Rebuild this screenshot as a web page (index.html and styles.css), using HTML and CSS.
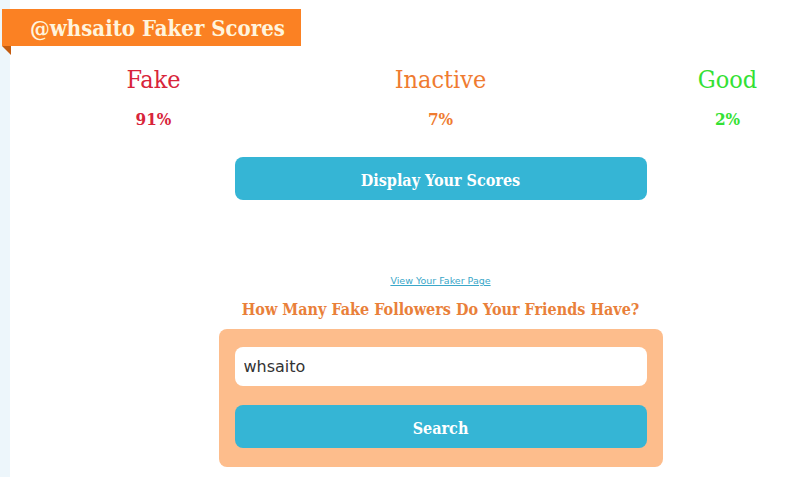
FILE: index.html
```html
<!DOCTYPE html>
<html>
<head>
<meta charset="utf-8">
<link rel="stylesheet" href="styles.css">
</head>
<body>
<div class="page">
  <aside class="strip"></aside>
  <main class="main">
    <div class="banner">@whsaito Faker Scores<span class="fold"></span></div>
    <div class="scores">
      <div class="score fake"><div class="label">Fake</div><div class="pct">91%</div></div>
      <div class="score inactive"><div class="label">Inactive</div><div class="pct">7%</div></div>
      <div class="score good"><div class="label">Good</div><div class="pct">2%</div></div>
    </div>
    <div class="center">
      <button class="btn display">Display Your Scores</button>
      <a class="link" href="#">View Your Faker Page</a>
      <h2 class="question">How Many Fake Followers Do Your Friends Have?</h2>
      <div class="searchbox">
        <input class="input" type="text" value="whsaito">
        <button class="btn search">Search</button>
      </div>
    </div>
  </main>
</div>
</body>
</html>
```

FILE: styles.css
```css
html, body {
  margin: 0;
  padding: 0;
  background: #ffffff;
  overflow: hidden;
}
.page {
  display: flex;
  width: 789px;
  height: 477px;
  overflow: hidden;
}
.strip {
  width: 10px;
  flex: none;
  background: #edf6fb;
}
.main {
  width: 861px;
  flex: none;
  position: relative;
  font-family: "DejaVu Serif Condensed", "DejaVu Serif", serif;
}
.banner {
  position: absolute;
  left: -8px;
  top: 9px;
  width: 299px;
  height: 37px;
  box-sizing: border-box;
  padding-left: 28px;
  padding-top: 1px;
  background: #fb8123;
  color: #fff4dd;
  font-size: 22px;
  font-weight: bold;
  line-height: 36px;
  white-space: nowrap;
}
.fold {
  position: absolute;
  left: 0;
  top: 37px;
  width: 0;
  height: 0;
  border-top: 9px solid #c45c10;
  border-left: 9px solid transparent;
}
.scores {
  display: grid;
  grid-template-columns: repeat(3, 287px);
  padding-top: 64px;
}
.score {
  text-align: center;
}
.label {
  font-size: 25px;
  line-height: 32px;
}
.pct {
  font-size: 17px;
  font-weight: bold;
  line-height: 22px;
  margin-top: 12px;
}
.fake { color: #d8243a; }
.inactive { color: #ef7b30; }
.good { color: #33e133; }
.center {
  display: flex;
  flex-direction: column;
  align-items: center;
}
.btn {
  display: block;
  width: 412px;
  height: 43px;
  border: none;
  border-radius: 8px;
  background: #35b5d5;
  color: #ffffff;
  font-family: "DejaVu Serif Condensed", "DejaVu Serif", serif;
  font-weight: bold;
  font-size: 16px;
  padding: 3px 0 0;
}
.display {
  margin-top: 27px;
}
.link {
  margin-top: 75px;
  font-family: Tahoma, "DejaVu Sans", sans-serif;
  font-size: 9.5px;
  line-height: 12px;
  color: #3aa7c9;
}
.question {
  margin: 13px 0 0;
  font-size: 16px;
  font-weight: bold;
  line-height: 20px;
  color: #e9803a;
}
.searchbox {
  margin-top: 9px;
  width: 444px;
  box-sizing: border-box;
  padding: 18px 16px 19px;
  background: #fdbd8c;
  border-radius: 8px;
  display: flex;
  flex-direction: column;
  gap: 19px;
}
.input {
  width: 412px;
  height: 39px;
  box-sizing: border-box;
  border: none;
  border-radius: 8px;
  padding: 0 9px;
  font-family: "DejaVu Sans", Verdana, sans-serif;
  font-size: 16px;
  color: #333333;
  background: #ffffff;
  outline: none;
}
```
